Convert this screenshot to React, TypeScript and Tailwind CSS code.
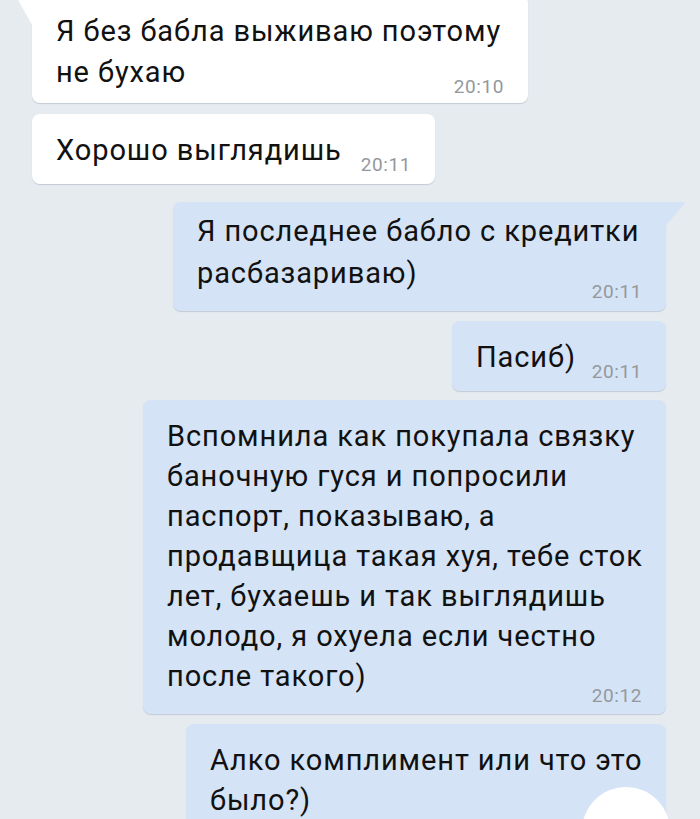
import React from "react";

type Msg = {
  out?: boolean;
  lines: string[];
  time?: string;
  inline?: boolean;
  tail?: boolean;
  box: string; // margin, width, padding
  lead: string;
  ts?: string; // timestamp offset
};

const messages: Msg[] = [
  {
    lines: ["Я без бабла выживаю поэтому", "не бухаю"],
    time: "20:10",
    tail: true,
    box: "-mt-[5px] w-[496px] pt-4 pb-[7px]",
    lead: "leading-[41px]",
    ts: "-mt-[16px]",
  },
  {
    lines: ["Хорошо выглядишь"],
    time: "20:11",
    inline: true,
    box: "mt-[11px] w-[403px] pt-4 pb-[13px]",
    lead: "leading-[41px]",
  },
  {
    out: true,
    lines: ["Я последнее бабло с кредитки", "расбазариваю)"],
    time: "20:11",
    tail: true,
    box: "mt-[18px] w-[493px] pt-2 pb-[10px]",
    lead: "leading-[42px]",
    ts: "-mt-[12px]",
  },
  {
    out: true,
    lines: ["Пасиб)"],
    time: "20:11",
    inline: true,
    box: "mt-[10px] w-[214px] pt-4 pb-[13px]",
    lead: "leading-[41px]",
  },
  {
    out: true,
    lines: [
      "Вспомнила как покупала связку",
      "баночную гуся и попросили",
      "паспорт, показываю, а",
      "продавщица такая хуя, тебе сток",
      "лет, бухаешь и так выглядишь",
      "молодо, я охуела если честно",
      "после такого)",
    ],
    time: "20:12",
    box: "mt-[9px] w-[523px] pt-4 pb-[9px]",
    lead: "leading-[40px]",
    ts: "-mt-[10px]",
  },
  {
    out: true,
    lines: ["Алко комплимент или что это", "было?)"],
    box: "mt-[10px] w-[480px] pt-4 pb-10",
    lead: "leading-[40px]",
  },
];

function Tail({ out }: { out?: boolean }) {
  if (out) {
    return (
      <svg
        className="absolute top-0 -right-[20px]"
        width="21"
        height="26"
        viewBox="0 0 21 26"
      >
        <path d="M0 0 H18.5 Q21 0 19.5 2 L2 22 Q0 24.5 0 26 Z" fill="#d4e3f5" />
      </svg>
    );
  }
  return (
    <svg
      className="absolute top-0 -left-[20px]"
      width="21"
      height="32"
      viewBox="0 0 21 32"
    >
      <path d="M21 0 H6 Q3 0 5 3 L19 28 Q21 30.5 21 32 Z" fill="#ffffff" />
    </svg>
  );
}

function Bubble({ m }: { m: Msg }) {
  const bg = m.out ? "bg-[#d4e3f5]" : "bg-white";
  const corner = m.tail ? (m.out ? "rounded-tr-none" : "rounded-tl-none") : "";
  const side = m.out ? "self-end mr-[34px]" : "self-start ml-[32px]";

  return (
    <div
      className={`relative shrink-0 rounded-lg px-6 shadow-[0_1px_1px_rgba(40,60,90,0.18)] ${bg} ${corner} ${side} ${m.box}`}
    >
      {m.tail && <Tail out={m.out} />}
      {m.inline ? (
        <div className="flex items-end justify-between">
          <span className={`whitespace-nowrap text-[29px] tracking-[0.9px] text-[#111] ${m.lead}`}>
            {m.lines[0]}
          </span>
          {m.time && (
            <span className="-mb-[3px] text-[19px] leading-[19px] tracking-[0.6px] text-[#94989e]">
              {m.time}
            </span>
          )}
        </div>
      ) : (
        <div className="flex flex-col">
          <div className={`text-[29px] tracking-[0.9px] text-[#111] ${m.lead}`}>
            {m.lines.map((l) => (
              <div key={l} className="whitespace-nowrap">
                {l}
              </div>
            ))}
          </div>
          {m.time && (
            <span
              className={`self-end text-[19px] leading-[19px] tracking-[0.6px] text-[#94989e] ${m.ts}`}
            >
              {m.time}
            </span>
          )}
        </div>
      )}
    </div>
  );
}

export default function App() {
  return (
    <div className="relative flex h-[819px] w-[700px] flex-col overflow-hidden bg-[#e6ebf0] font-['Roboto',sans-serif]">
      {messages.map((m, i) => (
        <Bubble key={i} m={m} />
      ))}

      {/* scroll-down button peeking at the bottom */}
      <div className="absolute left-[582px] top-[787px] h-[88px] w-[88px] rounded-full bg-white" />
    </div>
  );
}
